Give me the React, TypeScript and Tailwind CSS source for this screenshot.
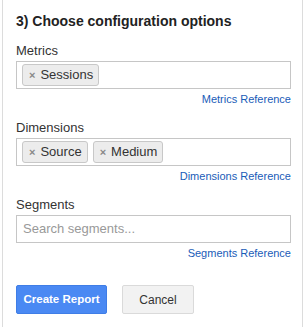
import React from 'react';

const Chip = ({ label }: { label: string }) => (
    <span className="inline-flex items-center h-[22px] pl-[6px] pr-[5px] gap-[5px] border border-[#c8c8c8] rounded-[3px] bg-[#ececec] text-[13px] text-[#333]">
        <span className="text-[11px] font-bold text-[#888] leading-none">×</span>
        {label}
    </span>
);

const Field = ({ label, link, children }: { label: string; link: string; children: React.ReactNode }) => (
    <div className="flex flex-col">
        <div className="text-[13px] text-[#333] leading-[16px] mb-[2px]">{label}</div>
        <div className="h-[28px] border border-[#c6c6c6] bg-white flex items-center gap-[5px] px-[5px]">
            {children}
        </div>
        <div className="text-right text-[11px] text-[#1a5cb8] leading-[14px] mt-[3px]">{link}</div>
    </div>
);

export default function App() {
    return (
        <div className="w-[307px] h-[327px] bg-white font-['Liberation_Sans',Arial,sans-serif]">
            <div className="ml-[2px] w-[301px] h-full border-x border-[#dcdcdc] pl-[13px] pr-[11px]">
                <h2 className="pt-[13px] text-[14px] font-bold text-[#222] leading-[17px]">3) Choose configuration options</h2>

                <div className="mt-[13px] flex flex-col gap-[14px]">
                    <Field label="Metrics" link="Metrics Reference">
                        <Chip label="Sessions" />
                    </Field>
                    <Field label="Dimensions" link="Dimensions Reference">
                        <Chip label="Source" />
                        <Chip label="Medium" />
                    </Field>
                    <Field label="Segments" link="Segments Reference">
                        <span className="text-[13px] text-[#999] pl-[1px]">Search segments...</span>
                    </Field>
                </div>

                <div className="mt-[25px] flex gap-[15px]">
                    <button className="w-[91px] h-[29px] rounded-[2px] bg-[#4a89f3] border border-[#3f7de6] text-white text-[11.5px] font-bold">
                        Create Report
                    </button>
                    <button className="w-[72px] h-[29px] rounded-[2px] bg-[#f2f2f2] border border-[#dadada] text-[#333] text-[12px]">
                        Cancel
                    </button>
                </div>
            </div>
        </div>
    );
}
